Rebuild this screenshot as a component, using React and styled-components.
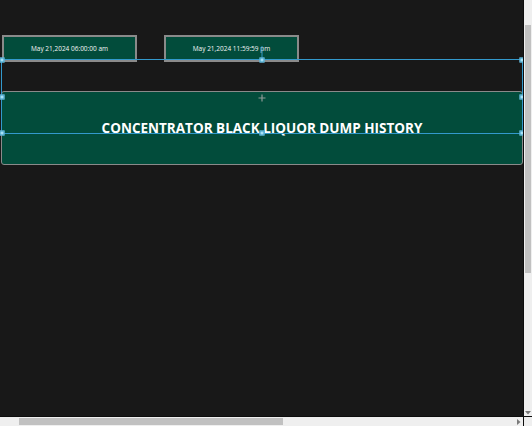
import React from 'react'
import styled, { createGlobalStyle } from 'styled-components'

const GlobalStyle = createGlobalStyle`
  html, body {
    margin: 0;
    padding: 0;
    background: #181818;
    overflow: hidden;
  }
`

const Frame = styled.div`
  width: 532px;
  height: 426px;
  display: grid;
  grid-template-columns: 523px 1px 8px;
  grid-template-rows: 416px 1px 9px;
  background: #181818;
`

const Canvas = styled.div`
  position: relative;
  overflow: hidden;
  padding-top: 35px;
  box-sizing: border-box;
`

const Divider = styled.div`
  background: #0d0d0d;
`

const DateRow = styled.div`
  display: flex;
  gap: 27px;
  padding-left: 2px;
`

const DateBox = styled.div`
  width: 135px;
  height: 27px;
  box-sizing: border-box;
  border: 2px solid #8a8a8a;
  background: #024c3b;
  display: flex;
  align-items: center;
  justify-content: center;
  color: #f2f6f5;
  font-family: "Open Sans", "Noto Sans", sans-serif;
  font-size: 6.5px;
  white-space: nowrap;
`

const Banner = styled.div`
  margin: 29px 0 0 1px;
  width: 522px;
  height: 74px;
  box-sizing: border-box;
  border: 1px solid #8a8a8a;
  border-radius: 3px;
  background: #024c3b;
  display: flex;
  align-items: center;
  justify-content: center;
  color: #ffffff;
  font-family: "Open Sans", "Noto Sans", sans-serif;
  font-weight: 700;
  font-size: 13.5px;
`

const Selection = styled.div`
  position: absolute;
  left: 1px;
  top: 59px;
  width: 522px;
  height: 75px;
  box-sizing: border-box;
  border: 1px solid #3399cc;
  pointer-events: none;
`

const Handle = styled.span`
  position: absolute;
  width: 3px;
  height: 3px;
  background: #a8e2f7;
  border: 1px solid #3a9cc4;
  left: ${p => p.x};
  top: ${p => p.y};
  transform: translate(-50%, -50%);
`

const RotateStem = styled.span`
  position: absolute;
  left: 50%;
  top: -14px;
  width: 1px;
  height: 14px;
  background: #3399cc;
  transform: translateX(-50%);
`

const MoveIcon = styled.svg`
  position: absolute;
  left: 50%;
  top: 38px;
  transform: translate(-50%, -50%);
`

const VTrack = styled.div`
  background: #efefef;
  position: relative;
  display: flex;
  flex-direction: column;
  align-items: center;
`

const VThumb = styled.div`
  margin-top: 25px;
  width: 6px;
  height: 248px;
  background: #c1c1c1;
`

const HTrack = styled.div`
  background: #efefef;
  display: flex;
  align-items: center;
`

const HThumb = styled.div`
  margin-left: 19px;
  width: 264px;
  height: 7px;
  background: #c1c1c1;
`

const Corner = styled.div`
  background: #efefef;
`

const Arrow = styled.svg`
  position: absolute;
  left: 1px;
  bottom: 1px;
`

const HArrowWrap = styled.div`
  margin-left: auto;
  margin-right: 2px;
  display: flex;
`

export default function App() {
  return (
    <>
      <GlobalStyle />
      <Frame>
        <Canvas>
          <DateRow>
            <DateBox>May 21,2024 06:00:00 am</DateBox>
            <DateBox>May 21,2024 11:59:59 pm</DateBox>
          </DateRow>
          <Banner>CONCENTRATOR BLACK LIQUOR DUMP HISTORY</Banner>
          <Selection>
            <RotateStem />
            <Handle x="0" y="0" />
            <Handle x="50%" y="0" />
            <Handle x="100%" y="0" />
            <Handle x="0" y="50%" />
            <Handle x="100%" y="50%" />
            <Handle x="0" y="100%" />
            <Handle x="50%" y="100%" />
            <Handle x="100%" y="100%" />
            <MoveIcon width="8" height="8" viewBox="0 0 8 8">
              <path d="M4 0.5V7.5M0.5 4H7.5" stroke="#8e9a97" strokeWidth="1.2" />
            </MoveIcon>
          </Selection>
        </Canvas>
        <Divider />
        <VTrack>
          <VThumb />
          <Arrow width="6" height="4" viewBox="0 0 6 4">
            <path d="M0 0H6L3 3.5Z" fill="#7a7a7a" />
          </Arrow>
        </VTrack>
        <Divider />
        <Divider />
        <Divider />
        <HTrack>
          <HThumb />
          <HArrowWrap>
            <svg width="4" height="6" viewBox="0 0 4 6">
              <path d="M0 0V6L3.5 3Z" fill="#7a7a7a" />
            </svg>
          </HArrowWrap>
        </HTrack>
        <Divider />
        <Corner />
      </Frame>
    </>
  )
}
